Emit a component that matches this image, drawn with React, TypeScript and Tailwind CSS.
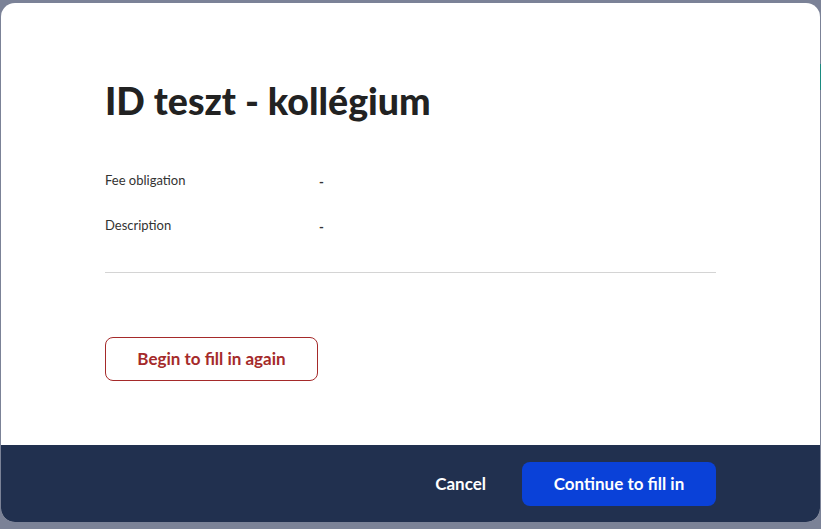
import React from "react";

export default function App() {
  return (
    <div className="relative h-[529px] w-[821px] overflow-hidden bg-[#7b8297] pl-[1px] pr-[1px] pt-[3px]" style={{ fontFamily: "Lato, 'Liberation Sans', sans-serif" }}>
      <div className="absolute right-0 top-[64px] h-[26px] w-[2px] bg-[#1a8a80]" />
      <div className="relative flex h-[519px] w-[819px] flex-col overflow-hidden rounded-[14px] bg-white">
        <div className="flex-1 pl-[104px] pr-[104px]">
          <h1 className="mt-[74px] font-['Lato_Black',Lato,sans-serif] text-[37.5px] font-black leading-[48px] text-[#222222]">ID teszt - kollégium</h1>
          <div className="mt-[44px] flex items-center text-[13px] text-[#333333]">
            <span className="w-[214px]">Fee obligation</span>
            <span className="mt-[4px] font-bold">-</span>
          </div>
          <div className="mt-[21px] flex items-center text-[13px] text-[#333333]">
            <span className="w-[214px]">Description</span>
            <span className="mt-[4px] font-bold">-</span>
          </div>
          <div className="mt-[35px] h-px w-[611px] bg-[#d4d4d4]" />
          <button className="mt-[64px] h-[44px] w-[213px] rounded-[8px] border border-[#a52a2a] text-[17px] font-bold text-[#a52a2a]">
            Begin to fill in again
          </button>
        </div>
        <div className="flex h-[77px] items-center justify-end bg-[#21304f] pr-[104px]">
          <button className="mr-[36px] text-[17px] font-bold text-white">Cancel</button>
          <button className="h-[44px] w-[194px] rounded-[8px] bg-[#0a41d8] text-[17px] font-bold text-white">Continue to fill in</button>
        </div>
      </div>
    </div>
  );
}
